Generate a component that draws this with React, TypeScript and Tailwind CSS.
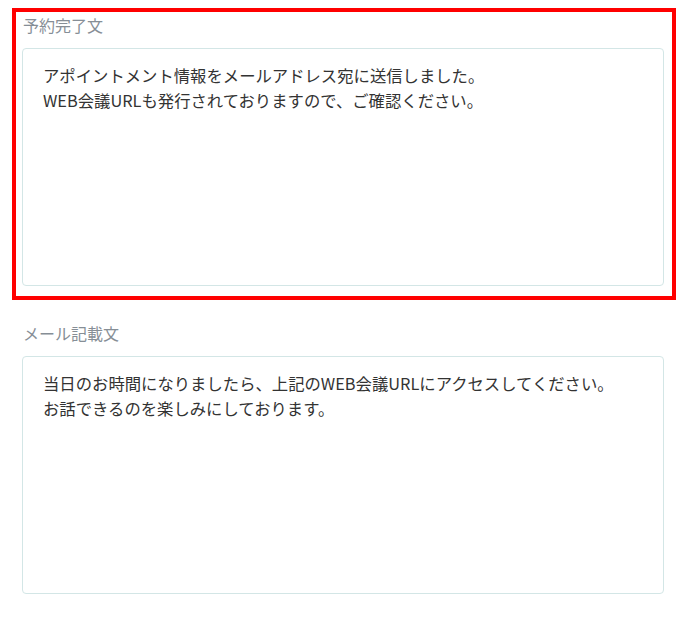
const SECTIONS = [
  {
    label: '予約完了文',
    body: 'アポイントメント情報をメールアドレス宛に送信しました。\nWEB会議URLも発行されておりますので、ご確認ください。',
    active: true,
  },
  {
    label: 'メール記載文',
    body: '当日のお時間になりましたら、上記のWEB会議URLにアクセスしてください。\nお話できるのを楽しみにしております。',
    active: false,
  },
]

export default function App() {
  return (
    <div
      className="min-h-[620px] bg-white pt-2 pl-3 pr-[14px]"
      style={{ fontFamily: '"Noto Sans CJK JP", "Noto Sans", sans-serif' }}
    >
      <div className="flex w-[664px] flex-col gap-4">
        {SECTIONS.map((s) => (
          <section
            key={s.label}
            className={`border-4 pl-[6px] pr-2 pt-px pb-[10px] ${s.active ? 'border-[#ff0000]' : 'border-transparent'}`}
          >
            {/* label */}
            <div className="mb-[11px] h-6 pl-px text-base leading-6 text-[#868e96]">{s.label}</div>
            {/* text area */}
            <div className="h-[238px] whitespace-pre-wrap rounded border border-[#d3e6e6] px-5 py-[14px] text-[16.35px] leading-[24.5px] text-[#333]">
              {s.body}
            </div>
          </section>
        ))}
      </div>
    </div>
  )
}
